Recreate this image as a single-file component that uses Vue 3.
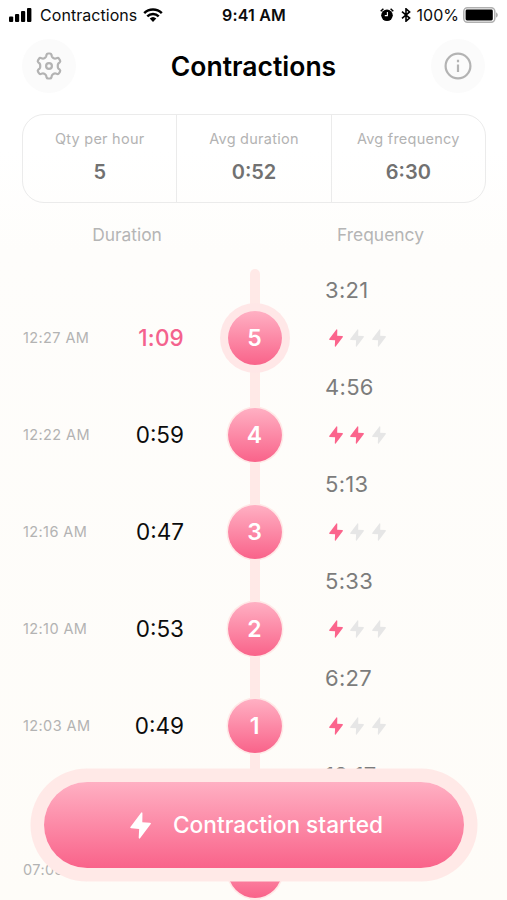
<template>
  <div class="screen">
    <div class="status">
      <div class="status__left">
        <svg class="status__signal" viewBox="0 0 23 14">
          <rect x="0" y="8.5" width="4.2" height="5.5" rx="1" />
          <rect x="6" y="6" width="4.2" height="8" rx="1" />
          <rect x="12" y="3" width="4.2" height="11" rx="1" />
          <rect x="18" y="0" width="4.4" height="14" rx="1" />
        </svg>
        <span class="status__carrier">Contractions</span>
        <svg class="status__wifi" viewBox="0 0 20 14">
          <path d="M1.2 5.2a12.6 12.6 0 0 1 17.6 0" />
          <path d="M4.3 8.3a8.2 8.2 0 0 1 11.4 0" />
          <path class="status__dot" d="M10 14l-3.3-3.4a4.8 4.8 0 0 1 6.6 0z" />
        </svg>
      </div>
      <span class="status__time">9:41 AM</span>
      <div class="status__right">
        <svg class="status__alarm" viewBox="0 0 14 14">
          <circle cx="7" cy="7.3" r="5.8" />
          <path class="status__bell" d="M.7 3.3L3.4.8M13.3 3.3L10.6.8" />
          <path class="status__hands" d="M7.4 4v3.6H4.8" />
        </svg>
        <svg class="status__bluetooth" viewBox="0 0 10 14">
          <path d="M1 3.7l7.6 6.4L5 13.2V.8l3.6 3.1L1 10.3" />
        </svg>
        <span class="status__percent">100%</span>
        <svg class="status__battery" viewBox="0 0 36 16">
          <rect class="status__case" x=".8" y=".8" width="31" height="14.4" rx="3.6" />
          <rect x="2.6" y="2.6" width="27.2" height="10.8" rx="1.4" />
          <path class="status__cap" d="M33 5.5c2.4.6 2.4 4.4 0 5z" />
        </svg>
      </div>
    </div>

    <header class="header">
      <button class="header__button">
        <svg viewBox="0 0 28 28">
          <path d="M11.6 2.6q.3-1.1 1.4-1.1h2q1.1 0 1.4 1.1l.4 1.7q.3 1 1.2 1.5l.8.5q.9.5 1.9.2l1.6-.5q1.1-.3 1.7.7l1 1.7q.6 1-.2 1.8l-1.3 1.2q-.7.7-.7 1.7v1.8q0 1 .7 1.7l1.3 1.2q.8.8.2 1.8l-1 1.7q-.6 1-1.7.7l-1.6-.5q-1-.3-1.9.2l-.8.5q-.9.5-1.2 1.5l-.4 1.7q-.3 1.1-1.4 1.1h-2q-1.1 0-1.4-1.1l-.4-1.7q-.3-1-1.2-1.5l-.8-.5q-.9-.5-1.9-.2l-1.6.5q-1.1.3-1.7-.7l-1-1.7q-.6-1 .2-1.8l1.3-1.2q.7-.7.7-1.7v-1.8q0-1-.7-1.7l-1.3-1.2q-.8-.8-.2-1.8l1-1.7q.6-1 1.7-.7l1.6.5q1 .3 1.9-.2l.8-.5q.9-.5 1.2-1.5z" />
          <circle cx="14" cy="14" r="2.9" />
        </svg>
      </button>
      <h1 class="header__title">Contractions</h1>
      <button class="header__button">
        <svg viewBox="0 0 28 28">
          <circle cx="14" cy="14" r="12.4" />
          <path d="M14 12.5v7.6M14 7.8v2.5" />
        </svg>
      </button>
    </header>

    <section class="stats">
      <div class="stats__item" v-for="stat in stats" :key="stat.label">
        <span class="stats__label">{{ stat.label }}</span>
        <span class="stats__value">{{ stat.value }}</span>
      </div>
    </section>

    <div class="columns">
      <span>Duration</span>
      <span>Frequency</span>
    </div>

    <main class="timeline">
      <div
        class="row"
        v-for="item in contractions"
        :key="item.number"
        :class="{ 'row--current': item.number === 5, 'row--spaced': item.number === 0 }"
      >
        <span class="row__frequency">{{ item.frequency }}</span>
        <span class="row__time">{{ item.time }}</span>
        <span class="row__duration">{{ item.duration }}</span>
        <span class="row__node">{{ item.number || '' }}</span>
        <div class="row__power">
          <svg v-for="n in 3" :key="n" :class="{ active: n <= item.power }" viewBox="0 0 14 18">
            <path :d="bolt" />
          </svg>
        </div>
      </div>
    </main>

    <button class="start">
      <svg class="start__icon" viewBox="0 0 14 18">
        <path :d="bolt" />
      </svg>
      <span class="start__text">Contraction started</span>
    </button>
  </div>
</template>

<script setup>
  import {ref} from 'vue';

  const bolt = 'M7.4.5L.4 9.8q-.7 1 .5 1.1l5.2.4-.3 5.7q.1 1.2.9.5l7-9.3q.7-1-.5-1.1l-5-.3.1-5.8q-.1-1.2-.9-.5z';

  const stats = ref([
    {label: 'Qty per hour', value: '5'},
    {label: 'Avg duration', value: '0:52'},
    {label: 'Avg frequency', value: '6:30'},
  ]);

  const contractions = ref([
    {number: 5, time: '12:27 AM', duration: '1:09', frequency: '3:21', power: 1},
    {number: 4, time: '12:22 AM', duration: '0:59', frequency: '4:56', power: 2},
    {number: 3, time: '12:16 AM', duration: '0:47', frequency: '5:13', power: 1},
    {number: 2, time: '12:10 AM', duration: '0:53', frequency: '5:33', power: 1},
    {number: 1, time: '12:03 AM', duration: '0:49', frequency: '6:27', power: 1},
    {number: 0, time: '07:03', duration: '', frequency: '12:17', power: 0},
  ]);
</script>

<style>
  body {
    margin: 0;
  }
</style>

<style scoped>
  .screen {
    position: relative;
    width: 507px;
    height: 900px;
    overflow: hidden;
    box-sizing: border-box;
    font-family: Inter, 'Liberation Sans', sans-serif;
    background: linear-gradient(#fff 0, #fff 150px, #fefdfb 250px, #fefcf8 100%);
    color: #0c0c0c;
  }

  button {
    border: 0;
    padding: 0;
    font-family: inherit;
  }

  svg {
    display: block;
    flex: none;
  }

  .status {
    display: grid;
    grid-template-columns: 1fr auto 1fr;
    align-items: center;
    height: 30px;
    padding: 0 8px 0 9px;
    font-size: 16px;
  }

  .status__left,
  .status__right {
    display: flex;
    align-items: center;
  }

  .status__right {
    justify-content: flex-end;
  }

  .status__signal {
    width: 23px;
    height: 14px;
  }

  .status__carrier {
    margin: 0 6px 0 8px;
    letter-spacing: 0.05px;
  }

  .status__wifi {
    width: 20px;
    height: 14px;
    fill: none;
    stroke: #000;
    stroke-width: 2.5;
  }

  .status__dot {
    fill: #000;
    stroke: none;
  }

  .status__time {
    font-weight: 600;
    letter-spacing: 0.2px;
  }

  .status__alarm {
    width: 14px;
    height: 14px;
  }

  .status__bell {
    stroke: #000;
    stroke-width: 1.5;
  }

  .status__hands {
    fill: none;
    stroke: #fff;
    stroke-width: 1.1;
  }

  .status__bluetooth {
    width: 10px;
    height: 14px;
    margin: 0 6px 0 7px;
    fill: none;
    stroke: #000;
    stroke-width: 1.6;
  }

  .status__battery {
    width: 36px;
    height: 16px;
    margin-left: 4px;
  }

  .status__case {
    fill: none;
    stroke: #b0b0b0;
    stroke-width: 1.5;
  }

  .status__cap {
    fill: #b0b0b0;
  }

  .header {
    display: flex;
    align-items: center;
    justify-content: space-between;
    height: 54px;
    margin-top: 9px;
    padding: 0 22px;
  }

  .header__title {
    margin: 0;
    font-size: 26.5px;
    font-weight: 600;
    color: #000;
  }

  .header__button {
    display: flex;
    align-items: center;
    justify-content: center;
    width: 54px;
    height: 54px;
    border-radius: 50%;
    background: #fbfbfb;
  }

  .header__button svg {
    width: 28px;
    height: 28px;
    fill: none;
    stroke: #b3b3b3;
    stroke-width: 2.2;
    stroke-linejoin: round;
  }

  .stats {
    display: flex;
    box-sizing: border-box;
    height: 89px;
    margin: 21px 21px 0 22px;
    border: 1.5px solid #ebebeb;
    border-radius: 22px;
  }

  .stats__item {
    display: flex;
    flex: 1;
    flex-direction: column;
    align-items: center;
    padding-top: 15px;
  }

  .stats__item + .stats__item {
    border-left: 1.5px solid #ebebeb;
  }

  .stats__label {
    font-size: 14.5px;
    line-height: 18px;
    letter-spacing: 0.25px;
    color: #b3b3b3;
  }

  .stats__value {
    margin-top: 12px;
    font-size: 20px;
    font-weight: 600;
    line-height: 24px;
    color: #717171;
  }

  .columns {
    display: grid;
    grid-template-columns: 254px 1fr;
    margin-top: 20px;
    font-size: 17.4px;
    line-height: 24px;
    color: #b5b5b5;
    text-align: center;
  }

  .timeline {
    position: relative;
    margin-top: 18.5px;
  }

  .timeline::before {
    content: '';
    position: absolute;
    top: 3px;
    bottom: 0;
    left: 249.5px;
    width: 10px;
    border-radius: 5px;
    background: #ffe9e7;
  }

  .row {
    position: relative;
    display: grid;
    grid-template-columns: 90px 71px 141px 1fr;
    grid-template-rows: 48.5px 48.5px;
    align-items: center;
    padding-left: 23px;
  }

  .row--spaced {
    grid-template-rows: 48.5px 143px;
  }

  .row__frequency {
    grid-column: 4;
    font-size: 22px;
    letter-spacing: 0.3px;
    color: #7c7c7c;
  }

  .row__time {
    grid-column: 1;
    padding-bottom: 1px;
    font-size: 14.5px;
    letter-spacing: 0.4px;
    color: #b3b3b3;
    white-space: nowrap;
  }

  .row--spaced .row__time {
    padding-bottom: 3px;
  }

  .row__duration {
    padding-bottom: 2px;
    font-size: 22.5px;
    text-align: right;
  }

  .row__node {
    display: flex;
    align-items: center;
    justify-content: center;
    place-self: center;
    width: 54px;
    height: 54px;
    border-radius: 50%;
    background: linear-gradient(#ffb0c3, #f9638a);
    box-shadow: 0 0 0 1.5px #ffe9e7;
    color: #fff;
    font-size: 23px;
    font-weight: 600;
  }

  .row__power {
    display: flex;
    gap: 7.5px;
    padding-left: 3.5px;
  }

  .row__power svg {
    width: 14px;
    height: 18px;
    fill: #e6e6e6;
  }

  .row__power .active {
    fill: #fb648c;
  }

  .row--current .row__duration {
    color: #f4628d;
    font-weight: 500;
    letter-spacing: 0.2px;
  }

  .row--current .row__node {
    box-shadow: 0 0 0 8px #ffe7e7;
  }

  .start {
    position: absolute;
    top: 782px;
    left: 44px;
    display: flex;
    align-items: center;
    justify-content: center;
    gap: 22px;
    width: 420px;
    height: 86px;
    padding-left: 5px;
    border-radius: 43px;
    background: linear-gradient(#ffb0c3, #f9638a);
    box-shadow: 0 0 0 13.5px #ffe9e7;
    color: #fff;
    font-size: 22.7px;
    font-weight: 500;
  }

  .start__icon {
    width: 21px;
    height: 27px;
    fill: #fff;
  }

  .start__text {
    padding-bottom: 2px;
  }
</style>
